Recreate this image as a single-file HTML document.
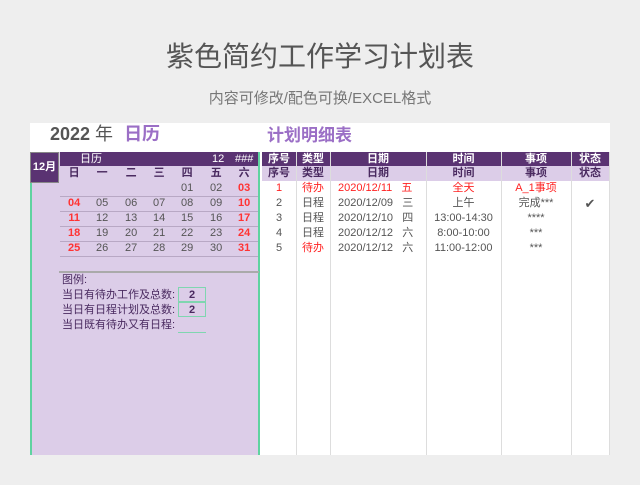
<!DOCTYPE html>
<html><head><meta charset="utf-8"><style>
*{margin:0;padding:0;box-sizing:border-box}
body{width:640px;height:485px;background:#eeeeee;font-family:"Liberation Sans","Noto Sans CJK SC",sans-serif;position:relative;overflow:hidden}
.a{position:absolute;white-space:nowrap}
.c{text-align:center}
.card{position:absolute;left:30px;top:123px;width:580px;height:332px;background:#fff}
.dk{background:#5a3372;color:#fff}
.lt{background:#dccde8;color:#4a2a60}
.cal div{position:absolute;height:15px;line-height:15px;font-size:11px;text-align:center;width:28.3px;color:#555}
.r{color:#ff3333!important;font-weight:bold}
.tb div{position:absolute;height:15px;line-height:15px;font-size:11px;text-align:center;color:#555;overflow:visible}
.red{color:#ff2222!important}
</style></head><body>
<div class="a c" style="left:0;width:640px;top:35px;font-size:28px;color:#555">紫色简约工作学习计划表</div>
<div class="a c" style="left:0;width:640px;top:87px;font-size:15px;color:#777">内容可修改/配色可换/EXCEL格式</div>
<div class="card"></div>
<div class="a" style="left:50px;top:120px;font-size:18px;font-weight:bold;color:#555">2022 <span style="font-weight:normal">年</span> <span style="color:#9b6fc6;margin-left:6px">日历</span></div>
<div class="a" style="left:267px;top:121px;font-size:17px;font-weight:bold;color:#9b6fc6">计划明细表</div>
<!-- left panel -->
<div class="a" style="left:30px;top:152px;width:230px;height:303px;background:#dccde8;border-left:2px solid #5fd3a0;border-right:2px solid #5fd3a0"></div>
<div class="a dk c" style="left:30px;top:152px;width:29px;height:31px;line-height:29px;font-size:11px;font-weight:bold;border:1px solid #888">12月</div>
<div class="a dk" style="left:60px;top:152px;width:198px;height:14px;font-size:11px;line-height:14px"><span style="margin-left:20px">日历</span><span style="position:absolute;left:152px">12</span><span style="position:absolute;left:175px">###</span></div>
<div class="cal">
<div style="left:60px;top:166px;font-weight:bold;color:#4a2a60">日</div><div style="left:88px;top:166px;font-weight:bold;color:#4a2a60">一</div><div style="left:117px;top:166px;font-weight:bold;color:#4a2a60">二</div><div style="left:145px;top:166px;font-weight:bold;color:#4a2a60">三</div><div style="left:173px;top:166px;font-weight:bold;color:#4a2a60">四</div><div style="left:202px;top:166px;font-weight:bold;color:#4a2a60">五</div><div style="left:230px;top:166px;font-weight:bold;color:#4a2a60">六</div>
<div style="left:173px;top:181px">01</div><div style="left:202px;top:181px">02</div><div class="r" style="left:230px;top:181px">03</div>
<div class="r" style="left:60px;top:196px">04</div><div style="left:88px;top:196px">05</div><div style="left:117px;top:196px">06</div><div style="left:145px;top:196px">07</div><div style="left:173px;top:196px">08</div><div style="left:202px;top:196px">09</div><div class="r" style="left:230px;top:196px">10</div>
<div class="r" style="left:60px;top:211px">11</div><div style="left:88px;top:211px">12</div><div style="left:117px;top:211px">13</div><div style="left:145px;top:211px">14</div><div style="left:173px;top:211px">15</div><div style="left:202px;top:211px">16</div><div class="r" style="left:230px;top:211px">17</div>
<div class="r" style="left:60px;top:226px">18</div><div style="left:88px;top:226px">19</div><div style="left:117px;top:226px">20</div><div style="left:145px;top:226px">21</div><div style="left:173px;top:226px">22</div><div style="left:202px;top:226px">23</div><div class="r" style="left:230px;top:226px">24</div>
<div class="r" style="left:60px;top:241px">25</div><div style="left:88px;top:241px">26</div><div style="left:117px;top:241px">27</div><div style="left:145px;top:241px">28</div><div style="left:173px;top:241px">29</div><div style="left:202px;top:241px">30</div><div class="r" style="left:230px;top:241px">31</div>
</div>
<div class="a" style="left:60px;top:196px;width:198px;border-top:1px solid #b8a8c4"></div>
<div class="a" style="left:60px;top:211px;width:198px;border-top:1px solid #b8a8c4"></div>
<div class="a" style="left:60px;top:226px;width:198px;border-top:1px solid #b8a8c4"></div>
<div class="a" style="left:60px;top:241px;width:198px;border-top:1px solid #b8a8c4"></div>
<div class="a" style="left:60px;top:256px;width:198px;border-top:1px solid #b8a8c4"></div>
<div class="a" style="left:59px;top:271px;width:200px;border-top:2px solid #aaa"></div>
<div class="a" style="left:62px;top:273px;font-size:11px;line-height:15px;color:#4a2a60">图例:<br>当日有待办工作及总数:<br>当日有日程计划及总数:<br>当日既有待办又有日程:</div>
<div class="a c" style="left:178px;top:287px;width:28px;height:15px;line-height:14px;border:1px solid #7fd6b0;font-size:11px;font-weight:bold;color:#4a2a60">2</div>
<div class="a c" style="left:178px;top:302px;width:28px;height:15px;line-height:14px;border:1px solid #7fd6b0;font-size:11px;font-weight:bold;color:#4a2a60">2</div>
<div class="a" style="left:178px;top:332px;width:28px;border-top:1px solid #7fd6b0"></div>
<!-- right table -->
<div class="a dk" style="left:262px;top:152px;width:347px;height:14px"></div>
<div class="a lt" style="left:262px;top:166px;width:347px;height:15px"></div>
<div class="a" style="left:296px;top:152px;height:303px;border-left:1px solid #ddd"></div>
<div class="a" style="left:330px;top:152px;height:303px;border-left:1px solid #ddd"></div>
<div class="a" style="left:426px;top:152px;height:303px;border-left:1px solid #ddd"></div>
<div class="a" style="left:501px;top:152px;height:303px;border-left:1px solid #ddd"></div>
<div class="a" style="left:571px;top:152px;height:303px;border-left:1px solid #ddd"></div>
<div class="a" style="left:609px;top:152px;height:303px;border-left:1px solid #ddd"></div>
<div class="tb">
<div style="left:262px;width:34px;top:152px;height:14px;line-height:14px;color:#fff;font-weight:bold">序号</div><div style="left:296px;width:34px;top:152px;height:14px;line-height:14px;color:#fff;font-weight:bold">类型</div><div style="left:330px;width:96px;top:152px;height:14px;line-height:14px;color:#fff;font-weight:bold">日期</div><div style="left:426px;width:75px;top:152px;height:14px;line-height:14px;color:#fff;font-weight:bold">时间</div><div style="left:501px;width:70px;top:152px;height:14px;line-height:14px;color:#fff;font-weight:bold">事项</div><div style="left:571px;width:38px;top:152px;height:14px;line-height:14px;color:#fff;font-weight:bold">状态</div>
<div style="left:262px;width:34px;top:166px;color:#4a2a60;font-weight:bold">序号</div><div style="left:296px;width:34px;top:166px;color:#4a2a60;font-weight:bold">类型</div><div style="left:330px;width:96px;top:166px;color:#4a2a60;font-weight:bold">日期</div><div style="left:426px;width:75px;top:166px;color:#4a2a60;font-weight:bold">时间</div><div style="left:501px;width:70px;top:166px;color:#4a2a60;font-weight:bold">事项</div><div style="left:571px;width:38px;top:166px;color:#4a2a60;font-weight:bold">状态</div>
<div class="red" style="left:262px;width:34px;top:181px">1</div><div class="red" style="left:296px;width:34px;top:181px">待办</div><div class="red" style="left:338px;top:181px">2020/12/11&nbsp;&nbsp;&nbsp;五</div><div class="red" style="left:426px;width:75px;top:181px">全天</div><div class="red" style="left:501px;width:70px;top:181px">A_1事项</div>
<div style="left:262px;width:34px;top:196px">2</div><div style="left:296px;width:34px;top:196px">日程</div><div style="left:338px;top:196px">2020/12/09&nbsp;&nbsp;&nbsp;三</div><div style="left:426px;width:75px;top:196px">上午</div><div style="left:501px;width:70px;top:196px">完成***</div><div style="left:571px;width:38px;top:196px;font-size:13px;color:#555">✔</div>
<div style="left:262px;width:34px;top:211px">3</div><div style="left:296px;width:34px;top:211px">日程</div><div style="left:338px;top:211px">2020/12/10&nbsp;&nbsp;&nbsp;四</div><div style="left:426px;width:75px;top:211px">13:00-14:30</div><div style="left:501px;width:70px;top:211px">****</div>
<div style="left:262px;width:34px;top:226px">4</div><div style="left:296px;width:34px;top:226px">日程</div><div style="left:338px;top:226px">2020/12/12&nbsp;&nbsp;&nbsp;六</div><div style="left:426px;width:75px;top:226px">8:00-10:00</div><div style="left:501px;width:70px;top:226px">***</div>
<div style="left:262px;width:34px;top:241px">5</div><div class="red" style="left:296px;width:34px;top:241px">待办</div><div style="left:338px;top:241px">2020/12/12&nbsp;&nbsp;&nbsp;六</div><div style="left:426px;width:75px;top:241px">11:00-12:00</div><div style="left:501px;width:70px;top:241px">***</div>
</div>
</body></html>
